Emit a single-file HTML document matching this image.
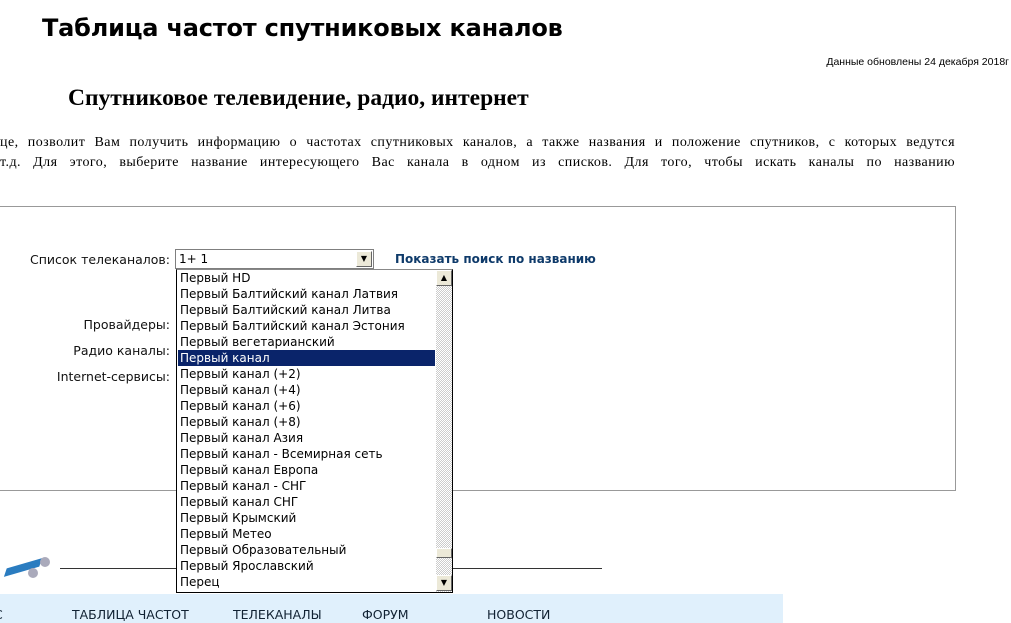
<!DOCTYPE html>
<html><head><meta charset="utf-8"><style>
body{margin:0;width:1011px;height:623px;overflow:hidden;background:#fff;position:relative;font-family:"Liberation Sans","DejaVu Sans",sans-serif}
.a{position:absolute;white-space:nowrap}
h1{position:absolute;left:42px;top:14px;margin:0;font:bold 24px "DejaVu Sans","Liberation Sans",sans-serif;letter-spacing:-0.2px}
h2{position:absolute;left:68px;top:85px;margin:0;font:bold 23.5px "Liberation Serif",serif}
.p{position:absolute;left:0;width:955px;font:14px "Liberation Serif",serif;letter-spacing:0.45px;text-align:justify;text-align-last:justify;white-space:nowrap;overflow:hidden}
.lbl{position:absolute;font:12.5px "DejaVu Sans",sans-serif;color:#111;text-align:right;width:170px;left:0}
.list{position:absolute;left:176px;top:269px;width:275px;height:322px;border:1px solid #000;border-top:1px solid #888;background:#fff;font:12px "DejaVu Sans",sans-serif}
.it{height:16px;line-height:16px;padding-left:2px;width:255px;margin-left:1px}
.sel{background:#0a246a;color:#fff}
.sb{position:absolute;right:0;top:0;width:16px;height:322px;background:repeating-conic-gradient(#ccc 0 25%,#fff 0 50%) 0 0/2px 2px}
.btn{position:absolute;width:14px;height:14px;background:#ece9d8;border:1px solid;border-color:#fff #666 #666 #fff;font-size:8px;text-align:center;line-height:14px}
.nav{position:absolute;left:0;top:594px;width:783px;height:29px;background:#e0f0fc;font:12.5px "DejaVu Sans",sans-serif;color:#123}
.nav span{position:absolute;top:13px}
</style></head><body>
<h1>Таблица частот спутниковых каналов</h1>
<div class="a" style="right:2px;top:56px;font-size:10.5px">Данные обновлены 24 декабря 2018г</div>
<h2>Спутниковое телевидение, радио, интернет</h2>
<div class="p" style="top:135px">це, позволит Вам получить информацию о частотах спутниковых каналов, а также названия и положение спутников, с которых ведутся</div>
<div class="p" style="top:155px">т.д. Для этого, выберите название интересующего Вас канала в одном из списков. Для того, чтобы искать каналы по названию</div>
<div style="position:absolute;left:-2px;top:206px;width:956px;height:283px;border:1px solid #999"></div>
<div class="lbl" style="top:252px">Список телеканалов:</div>
<div class="lbl" style="top:317px">Провайдеры:</div>
<div class="lbl" style="top:343px">Радио каналы:</div>
<div class="lbl" style="top:369px">Internet-сервисы:</div>
<div style="position:absolute;left:175px;top:249px;width:199px;height:20px;border:1px solid #7f7f7f;background:#fff;font:12px 'DejaVu Sans',sans-serif;line-height:18px;padding-left:3px;box-sizing:border-box">1+ 1<div class="btn" style="right:1px;top:1px;height:14px">▼</div></div>
<div class="a" style="left:395px;top:252px;font:bold 12px 'DejaVu Sans',sans-serif;color:#0e3a6a">Показать поиск по названию</div>
<div style="position:absolute;left:60px;top:568px;width:542px;height:1px;background:#333"></div>
<div style="position:absolute;left:8px;top:563px;width:30px;height:9px;background:#2a7cc0;transform:skewX(-35deg) rotate(-20deg)"></div>
<div style="position:absolute;left:40px;top:557px;width:10px;height:10px;border-radius:50%;background:#aab"></div>
<div style="position:absolute;left:28px;top:568px;width:10px;height:10px;border-radius:50%;background:#aab"></div>
<div class="list">
<div class="it">Первый HD</div><div class="it">Первый Балтийский канал Латвия</div><div class="it">Первый Балтийский канал Литва</div><div class="it">Первый Балтийский канал Эстония</div><div class="it">Первый вегетарианский</div><div class="it sel">Первый канал</div><div class="it">Первый канал (+2)</div><div class="it">Первый канал (+4)</div><div class="it">Первый канал (+6)</div><div class="it">Первый канал (+8)</div><div class="it">Первый канал Азия</div><div class="it">Первый канал - Всемирная сеть</div><div class="it">Первый канал Европа</div><div class="it">Первый канал - СНГ</div><div class="it">Первый канал СНГ</div><div class="it">Первый Крымский</div><div class="it">Первый Метео</div><div class="it">Первый Образовательный</div><div class="it">Первый Ярославский</div><div class="it">Перец</div>
<div class="sb"><div class="btn" style="left:0;top:0">▲</div><div class="btn" style="left:0;top:278px;height:8px"></div><div class="btn" style="left:0;top:305px">▼</div></div>
</div>
<div class="nav"><span style="left:-6px">С</span><span style="left:72px">ТАБЛИЦА ЧАСТОТ</span><span style="left:233px">ТЕЛЕКАНАЛЫ</span><span style="left:362px">ФОРУМ</span><span style="left:487px">НОВОСТИ</span></div>
</body></html>
